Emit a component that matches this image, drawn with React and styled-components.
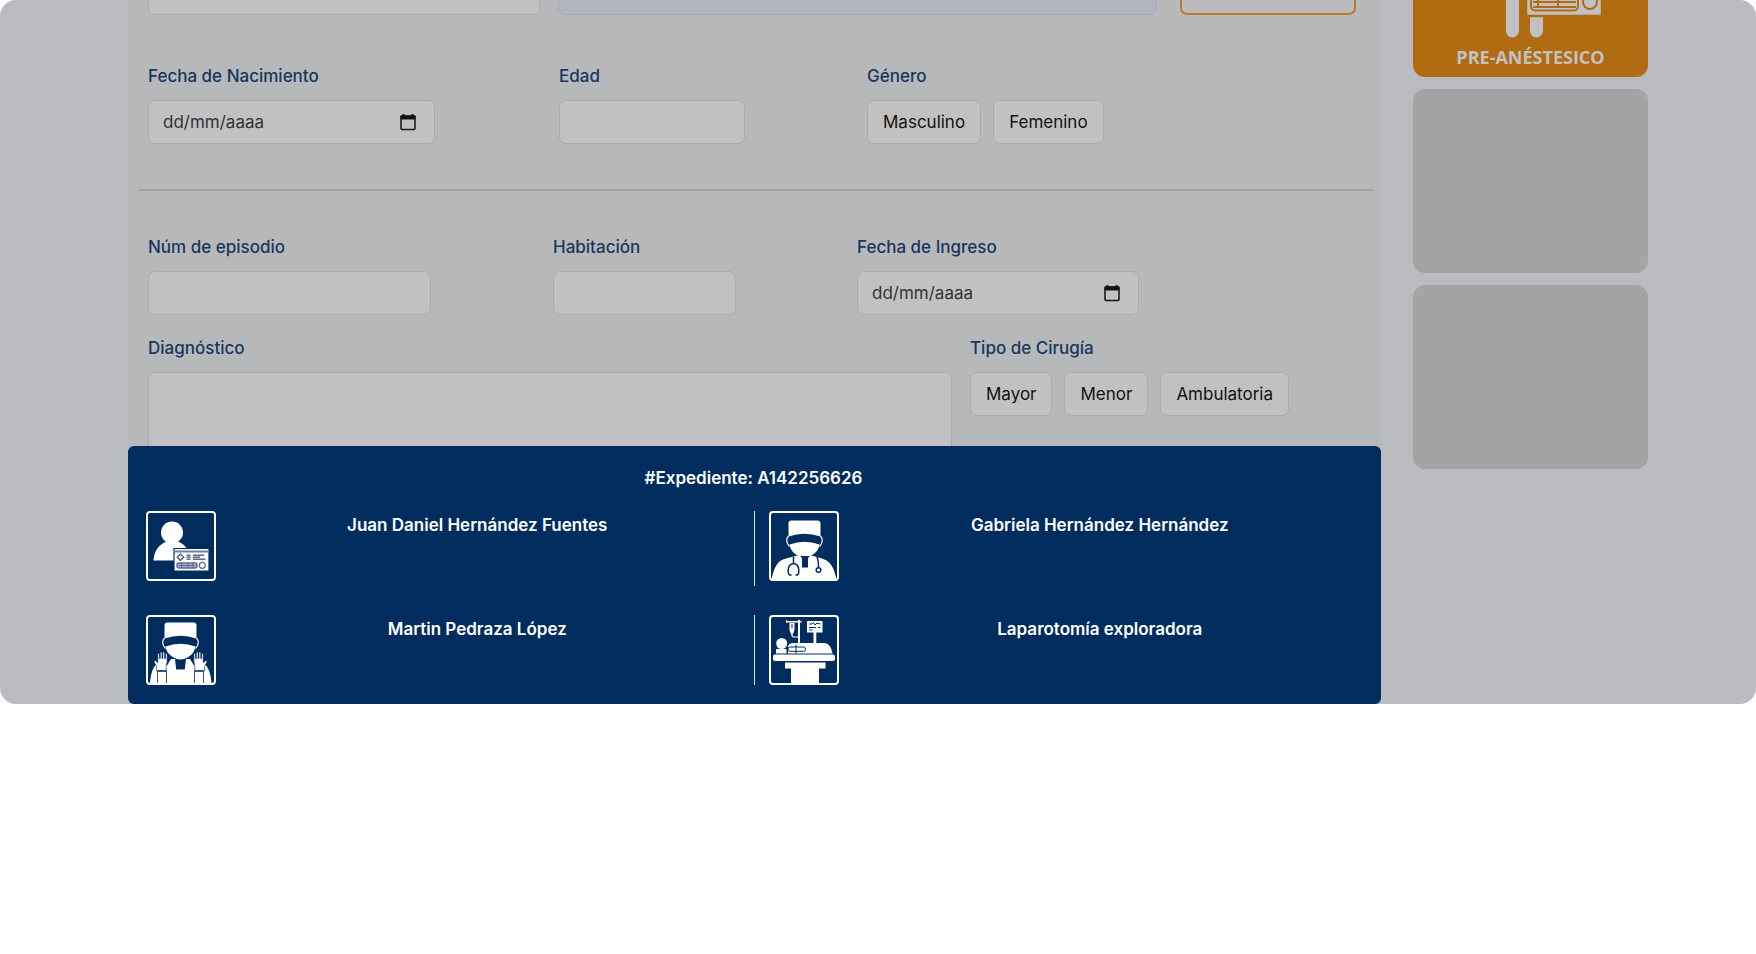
import React from 'react';
import styled, { createGlobalStyle } from 'styled-components';

const navy = '#002d5e';

const GlobalStyle = createGlobalStyle`
  *, *::before, *::after { box-sizing: border-box; }
  body { margin: 0; background: #fff; font: 400 17px/24px Inter, "Liberation Sans", sans-serif; color: #111; }
  button, input, textarea { font: inherit; color: inherit; }
`;

const Screen = styled.main`
  display: grid;
  grid-template-columns: minmax(0, 1fr) 235px;
  gap: 32px;
  padding: 0 108px 0 128px;
  background: #babbc0;
  border-radius: 16px;
  overflow: hidden;
`;

const Panel = styled.div`
  position: relative;
  background: #b7b8ba;
`;

const Form = styled.form`
  padding: 0 20px 222px;
`;

const FieldRow = styled.div`
  display: grid;
  grid-template-columns: ${(p) => p.$columns};
  column-gap: 18px;
  align-items: start;
  margin-top: ${(p) => p.$top || 0}px;
`;

const Field = styled.div`
  display: flex;
  flex-direction: column;
  gap: 12px;
  width: ${(p) => p.$width || '100%'};
`;

const labelText = `
  display: block;
  padding: 0;
  color: #17375f;
  font-weight: 500;
  line-height: 24px;
`;

const Label = styled.label`${labelText}`;
const Caption = styled.span`${labelText}`;

const boxLook = `
  border: 1px solid #a9abb1;
  border-radius: 7px;
  background: #c1c1c1;
`;

const TextInput = styled.input`
  ${boxLook}
  width: 100%;
  height: 44px;
  padding: 0 14px;
  ${(p) => p.$filled && 'background: #b1b5c1;'}
`;

const TextArea = styled.textarea`
  ${boxLook}
  display: block;
  width: 100%;
  height: 110px;
  padding: 10px 14px;
  resize: none;
`;

const DateBox = styled.div`
  ${boxLook}
  display: flex;
  align-items: center;
  height: 44px;
  padding: 0 18px 0 14px;
`;

const DateInput = styled.input`
  flex: 1;
  min-width: 0;
  padding: 0;
  border: 0;
  outline: 0;
  background: none;
  &::placeholder { color: #333; opacity: 1; }
`;

const PickerButton = styled.button`
  display: flex;
  padding: 0;
  border: 0;
  background: none;
  color: #141414;
`;

const Options = styled.div`
  display: flex;
  gap: 12px;
`;

const OptionButton = styled.button`
  ${boxLook}
  height: 44px;
  padding: 0 15px;
  white-space: nowrap;
`;

const SaveButton = styled.button`
  justify-self: center;
  width: 176px;
  height: 44px;
  padding: 0;
  border: 2px solid #b97a2c;
  border-radius: 7px;
  background: #b9babb;
  color: #b5a590;
  font-size: 18px;
  font-weight: 600;
  line-height: 24px;
`;

const Divider = styled.hr`
  height: 2px;
  margin: 45px -12px 0 -10px;
  border: 0;
  background: #a2a4a7;
`;

const Summary = styled.section`
  position: absolute;
  inset: auto 0 0;
  padding: 20px 20px 19px 18px;
  border-radius: 6px;
  background: ${navy};
  color: #fff;
  text-align: center;
`;

const SummaryTitle = styled.h2`
  margin: 0 0 21px;
  font-size: 17px;
  font-weight: 600;
  line-height: 24px;
`;

const SummaryGrid = styled.div`
  display: grid;
  grid-template-columns: 1fr 1fr;
  row-gap: 29px;
`;

const SummaryItem = styled.div`
  display: flex;
  min-height: ${(p) => (p.$tall ? 75 : 70)}px;
  padding: ${(p) => (p.$divided ? '0 0 0 14px' : '0 15px 0 0')};
  border-left: ${(p) => (p.$divided ? '1px solid #dfe5ec' : '0')};
`;

const SummaryName = styled.p`
  flex: 1;
  margin: 2px 0 0;
  font-weight: 600;
`;

const Side = styled.aside`
  display: flex;
  flex-direction: column;
  gap: 12px;
  margin-top: -107px;
`;

const Tile = styled.button`
  display: flex;
  flex-direction: column;
  align-items: center;
  justify-content: flex-end;
  width: 100%;
  height: 184px;
  padding: 0 0 8px;
  border: 0;
  border-radius: 12px;
  background: ${(p) => (p.$active ? '#b16b10' : '#a4a4a4')};
  color: #c1c1c1;
  font: 700 18px/24px "Open Sans", "Noto Sans", sans-serif;
`;

function CalendarIcon() {
  return (
    <svg width="16" height="18" viewBox="0 0 16 18" aria-hidden="true">
      <rect x="1" y="3" width="14" height="13.5" rx="1" fill="none" stroke="currentColor" strokeWidth="1.5" />
      <path d="M.5 2.500h15V6.500H.5zM2.500 1h2v2h-2zM11.500 1h2v2h-2z" fill="currentColor" />
    </svg>
  );
}

function Framed({ children }) {
  return (
    <svg width="70" height="70" viewBox="0 0 70 70" aria-hidden="true">
      <g fill="#fff" stroke="none">{children}</g>
      <rect x="1" y="1" width="68" height="68" rx="3" fill="none" stroke="#fff" strokeWidth="2" />
    </svg>
  );
}

function PatientIcon() {
  return (
    <Framed>
      <circle cx="26" cy="21.5" r="11" />
      <path d="M7.5 49.5C8 40 13 33.5 20.5 30.5L21 29h10l.5 1.5C36 32 39 34.5 41 38v11.5z" />
      <path d="M28 37.5h35V60H28z" stroke={navy} strokeWidth="1.2" />
      <path d="M28.6 39.6h33.8v1.8H28.6z" fill="#6e7fa3" />
      <g fill="none" stroke="#5b6c94" strokeWidth="1.5">
        <path d="M34.5 43l3.2 3.2-3.2 3.2-3.2-3.2z" />
        <path d="M40.5 44.3h4M40.5 46.3h4M40.5 48.3h4M47 44.3h11M47 46.3h7M47 48.3h12.5" />
        <rect x="31" y="52" width="20" height="5" rx="2" fill="#a5b0c6" />
        <path d="M35.5 52v5M42 52v5M47 52v5M33 54.5h16" strokeWidth="1" />
        <circle cx="56.3" cy="54.3" r="3" strokeWidth="1.2" />
      </g>
    </Framed>
  );
}

function CappedHead() {
  return (
    <>
      <path d="M18.5 10.5q0-3 3-3h26q3 0 3 3V23.5Q34.500 18 18.5 23.500z" />
      <path d="M19.500 31.500Q34.500 26 49.500 31.500C48.500 39 41 44.500 34.500 44.500S20.500 39 19.500 31.500z" />
      <path d="M18.500 23Q14.500 27.500 19.500 33.500M50.500 23Q54.500 27.500 49.500 33.500" fill="none" stroke="#fff" strokeWidth="1.2" />
    </>
  );
}

function Hand() {
  return (
    <>
      <path d="M10.5 56V51.5L7.8 46.5l1.5-1 2.500 2.200V38.500h1.600v5h.9V37h1.700v6.500h.9V37h1.700v6.500h.9v-5h1.600v8.500l-1 4V56z" stroke={navy} strokeWidth=".6" />
      <path d="M11.5 68V55.500h9V68M11.500 56.500h9" fill="none" stroke="#33567f" strokeWidth="1" />
    </>
  );
}

function SurgeonIcon() {
  return (
    <Framed>
      <CappedHead />
      <path d="M4 68C5 57 7.500 50.500 12 48.500l9 2 4-6.500h4l1.200 10.500h8.600L40 44h4l4 6.500 9-2C62 50.500 64.500 57 65.500 68z" />
      <Hand />
      <g transform="translate(69 0) scale(-1 1)"><Hand /></g>
    </Framed>
  );
}

function DoctorIcon() {
  return (
    <Framed>
      <g transform="translate(1 2)"><CappedHead /></g>
      <path d="M2.500 68.500C4 61 6.500 54 10.500 50.500 15.500 47 24 46 28 44.500h14C47 46 54 47 59 50.500 63.500 54 66 61 67.500 68.500z" />
      <g fill="none" stroke={navy} strokeWidth="1.5">
        <path d="M24.500 45.500v7M22.500 64h-2q-1.500-1-1.300-5 .3-6 5.300-6.500 5 .5 5.300 6.500.2 4-1.300 5h-2" />
        <path d="M48 45.500q1.800 5 1.500 11" />
        <circle cx="49.5" cy="59" r="2.3" />
      </g>
      <path d="M31.500 45l1.500 2.500v9h6v-9l1.500-2.500z" fill={navy} />
    </Framed>
  );
}

function SurgeryIcon() {
  return (
    <Framed>
      <path d="M17.500 6h15v1.600h-15zM29 5h2v24h-2zM17 5h1v3h-1zM20.500 8h5v7l-1.500 4h-2l-1.500-4z" />
      <path d="M23 9v4" stroke={navy} strokeWidth="1" />
      <path d="M23 18v2.500q0 1.500 1.500 1.500H29" fill="none" stroke="#fff" strokeWidth="1.200" />
      <path d="M38 6h15.500v11.500H38zM44.500 17h2.800v11h-2.800z" />
      <path d="M40 9h3l1.500-1.500L46 10l2-2 3.500 1M40 12.500h7M49 12.500h2.500M40 15h3.500" fill="none" stroke={navy} strokeWidth="1" />
      <circle cx="12.7" cy="28.5" r="5.5" />
      <path d="M7 34h10.500v4.500H7z" />
      <path d="M19 38.500V31q1-2.500 4-3h33q6 1 7.500 10.500z" />
      <rect x="19" y="32" width="17.5" height="4.3" rx="2.1" stroke={navy} strokeWidth="1" />
      <path d="M27 29.500v9" stroke={navy} strokeWidth="1" />
      <rect x="4" y="39.500" width="62" height="6.500" rx="2" />
      <path d="M16 47.500h40.500v6H50V68H22V53.500h-6z" />
    </Framed>
  );
}

function PreAnesthesiaIcon() {
  return (
    <svg width="140" height="100" viewBox="0 0 140 100" aria-hidden="true">
      <g fill="#c1c1c1">
        <circle cx="58" cy="12" r="12" />
        <path d="M45 28h31v25H45z" />
        <path d="M45 40h13v46a6.500 6.500 0 0 1-13 0zM69 40h13v46a6.500 6.500 0 0 1-13 0z" />
        <path d="M65 30h76v41H65z" stroke="#b16b10" strokeWidth="2.500" />
      </g>
      <g fill="none" stroke="#b16b10" strokeWidth="2">
        <rect x="70" y="50" width="47" height="15.500" rx="4" />
        <path d="M72 57h43M77 52v10M97 52v10M72 62h43" />
        <circle cx="129" cy="57" r="7" />
      </g>
    </svg>
  );
}

function DateField({ id, label, width }) {
  return (
    <Field $width={width}>
      <Label htmlFor={id}>{label}</Label>
      <DateBox>
        <DateInput id={id} type="text" placeholder="dd/mm/aaaa" />
        <PickerButton type="button" aria-label={`Abrir calendario: ${label}`}><CalendarIcon /></PickerButton>
      </DateBox>
    </Field>
  );
}

function TextField({ id, label, width }) {
  return (
    <Field $width={width}>
      <Label htmlFor={id}>{label}</Label>
      <TextInput id={id} type="text" />
    </Field>
  );
}

function OptionField({ label, options }) {
  return (
    <Field role="group" aria-label={label}>
      <Caption>{label}</Caption>
      <Options>
        {options.map((o) => <OptionButton key={o} type="button">{o}</OptionButton>)}
      </Options>
    </Field>
  );
}

const team = [
  { name: 'Juan Daniel Hernández Fuentes', Icon: PatientIcon },
  { name: 'Gabriela Hernández Hernández', Icon: DoctorIcon },
  { name: 'Martin Pedraza López', Icon: SurgeonIcon },
  { name: 'Laparotomía exploradora', Icon: SurgeryIcon },
];

export default function App() {
  return (
    <>
      <GlobalStyle />
      <Screen>
        <Panel>
          <Form>
            <FieldRow $columns="392fr 599fr 186fr" $top={-29}>
              <TextInput type="text" aria-label="Nombre" />
              <TextInput type="text" aria-label="Apellidos" $filled />
              <SaveButton type="button">GUARDAR</SaveButton>
            </FieldRow>
            <FieldRow $columns="393fr 290fr 494fr" $top={49}>
              <DateField id="nacimiento" label="Fecha de Nacimiento" width="73%" />
              <TextField id="edad" label="Edad" width="64%" />
              <OptionField label="Género" options={['Masculino', 'Femenino']} />
            </FieldRow>
            <Divider />
            <FieldRow $columns="387fr 286fr 504fr" $top={44}>
              <TextField id="episodio" label="Núm de episodio" width="73%" />
              <TextField id="habitacion" label="Habitación" width="64%" />
              <DateField id="ingreso" label="Fecha de Ingreso" width="56%" />
            </FieldRow>
            <FieldRow $columns="804fr 391fr" $top={21}>
              <Field>
                <Label htmlFor="diagnostico">Diagnóstico</Label>
                <TextArea id="diagnostico" />
              </Field>
              <OptionField label="Tipo de Cirugía" options={['Mayor', 'Menor', 'Ambulatoria']} />
            </FieldRow>
          </Form>
          <Summary>
            <SummaryTitle>#Expediente: A142256626</SummaryTitle>
            <SummaryGrid>
              {team.map(({ name, Icon }, i) => (
                <SummaryItem key={name} $divided={i % 2 === 1} $tall={i < 2}>
                  <Icon />
                  <SummaryName>{name}</SummaryName>
                </SummaryItem>
              ))}
            </SummaryGrid>
          </Summary>
        </Panel>
        <Side>
          <Tile type="button" $active>
            <PreAnesthesiaIcon />
            PRE-ANÉSTESICO
          </Tile>
          <Tile type="button" aria-label="Sin asignar" />
          <Tile type="button" aria-label="Sin asignar" />
        </Side>
      </Screen>
    </>
  );
}
